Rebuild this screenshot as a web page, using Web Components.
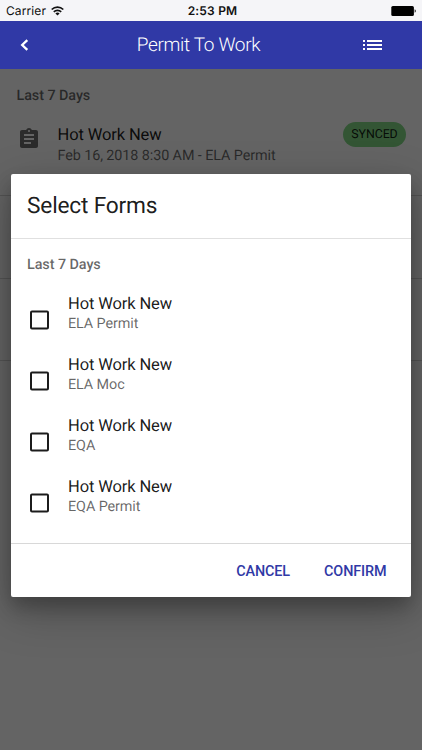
<!DOCTYPE html>
<html lang="en">
<head>
<meta charset="utf-8">
<meta name="viewport" content="width=device-width, initial-scale=1">
<title>Permit To Work</title>
<style>
	body {
		margin: 0;
		height: 100vh;
		overflow: hidden;
		font-family: Roboto, sans-serif;
		text-rendering: geometricPrecision;
	}
</style>
</head>
<body>
<permit-app></permit-app>

<script>
class StatusBar extends HTMLElement {
	constructor() {
		super();
		this.attachShadow({ mode: 'open' });
		this.shadowRoot.innerHTML = `
			<style>
				:host {
					display: grid;
					grid-template-columns: 1fr auto 1fr;
					align-items: center;
					height: 21px;
					padding: 0 5px 0 6px;
					box-sizing: border-box;
					background: #f5f5f8;
					color: #111;
					font: 12px/21px Inter, sans-serif;
				}
				.left {
					display: flex;
					align-items: center;
					gap: 5px;
				}
				.carrier {
					letter-spacing: 0.1px;
				}
				.time {
					padding-left: 2px;
					font-weight: 600;
					letter-spacing: 0.2px;
				}
				svg {
					display: block;
				}
				.battery {
					justify-self: end;
				}
			</style>
			<div class="left">
				<span class="carrier">${this.getAttribute('carrier')}</span>
				<svg width="13" height="10" viewBox="0 0 13 10" fill="none" stroke="#111" stroke-width="1.7">
					<path d="M.7 3.5a8.3 8.3 0 0 1 11.6 0M2.8 5.9a5.3 5.3 0 0 1 7.4 0"/>
					<path d="M6.5 9.6 4.4 7.5a3 3 0 0 1 4.2 0z" fill="#111" stroke="none"/>
				</svg>
			</div>
			<span class="time">${this.getAttribute('time')}</span>
			<svg class="battery" width="26" height="12" viewBox="0 0 26 12">
				<rect x=".3" y="1" width="22.6" height="10" rx="1.6" fill="#000"/>
				<path d="M23.7 4.3c1.4.4 1.4 3 0 3.4z" fill="#000"/>
			</svg>
		`;
	}
}
customElements.define('status-bar', StatusBar);

class AppToolbar extends HTMLElement {
	constructor() {
		super();
		this.attachShadow({ mode: 'open' });
		this.shadowRoot.innerHTML = `
			<style>
				:host {
					display: grid;
					grid-template-columns: 48px 1fr 98px;
					align-items: center;
					height: 48px;
					background: #3039a6;
					color: #fff;
				}
				h1 {
					margin: 0 -50px 0 0;
					padding-right: 25px;
					text-align: center;
					font-size: 19px;
					line-height: 48px;
					font-weight: 300;
					letter-spacing: -0.33px;
				}
				svg {
					display: block;
					justify-self: center;
				}
			</style>
			<svg width="24" height="24" viewBox="0 0 24 24" fill="none" stroke="#fff" stroke-width="2.3">
				<path d="M15.3 7.2 10.2 12l5.1 4.8"/>
			</svg>
			<h1><slot></slot></h1>
			<svg width="20" height="12" viewBox="0 0 20 12" fill="#fff">
				<path d="M0 1h2v2H0zM4 1h15v2H4zM0 5h2v2H0zM4 5h15v2H4zM0 9h2v2H0zM4 9h15v2H4z"/>
			</svg>
		`;
	}
}
customElements.define('app-toolbar', AppToolbar);

class ListHeading extends HTMLElement {
	constructor() {
		super();
		this.attachShadow({ mode: 'open' });
		this.shadowRoot.innerHTML = `
			<style>
				:host {
					display: block;
					height: 50px;
					padding: 0 16px;
					font-size: 14.4px;
					line-height: 52px;
					font-weight: 500;
					letter-spacing: -0.08px;
					color: rgba(0, 0, 0, 0.6);
				}
			</style>
			<slot></slot>
		`;
	}
}
customElements.define('list-heading', ListHeading);

class ItemText extends HTMLElement {
	constructor() {
		super();
		this.attachShadow({ mode: 'open' });
		this.shadowRoot.innerHTML = `
			<style>
				:host {
					display: block;
					font-size: 16.5px;
					line-height: 21px;
					letter-spacing: -0.12px;
					color: rgba(0, 0, 0, 0.9);
					white-space: nowrap;
				}
				.sub {
					font-size: 14.4px;
					line-height: var(--sub-line, 19px);
					letter-spacing: -0.1px;
					color: rgba(0, 0, 0, 0.6);
				}
			</style>
			<div><slot></slot></div>
			<div class="sub"><slot name="sub"></slot></div>
		`;
	}
}
customElements.define('item-text', ItemText);

class StatusChip extends HTMLElement {
	constructor() {
		super();
		this.attachShadow({ mode: 'open' });
		this.shadowRoot.innerHTML = `
			<style>
				:host {
					display: block;
					width: 63px;
					height: 25px;
					border-radius: 13px;
					background: #7fd583;
					text-align: center;
					font-size: 12.4px;
					line-height: 26px;
					letter-spacing: -0.1px;
					color: rgba(0, 0, 0, 0.87);
				}
			</style>
			<slot></slot>
		`;
	}
}
customElements.define('status-chip', StatusChip);

class PermitRow extends HTMLElement {
	constructor() {
		super();
		this.attachShadow({ mode: 'open' });
		this.shadowRoot.innerHTML = `
			<style>
				:host {
					display: flex;
					height: 82.5px;
					padding: 0 16px 0 16.5px;
					box-sizing: border-box;
					border-bottom: 1px solid #d2d2d2;
				}
				svg {
					margin: 6.5px 17px 0 0;
					fill: #6b6b6b;
				}
				::slotted(item-text) {
					flex: 1;
					margin-top: 5px;
				}
				::slotted(status-chip) {
					margin-top: 2px;
				}
			</style>
			${this.hasAttribute('empty') ? '' : `
			<svg width="24" height="24" viewBox="0 0 24 24">
				<path d="M19 3h-4.180C14.400 1.840 13.300 1 12 1c-1.300 0-2.400.84-2.820 2H5c-1.100 0-2 .9-2 2v14c0 1.100.9 2 2 2h14c1.100 0 2-.9 2-2V5c0-1.100-.9-2-2-2zm-7 0c.55 0 1 .45 1 1s-.45 1-1 1-1-.45-1-1 .45-1 1-1zm2 14H7v-2h7v2zm3-4H7v-2h10v2zm0-4H7V7h10v2z"/>
			</svg>`}
			<slot></slot>
		`;
	}
}
customElements.define('permit-row', PermitRow);

class CheckRow extends HTMLElement {
	constructor() {
		super();
		this.attachShadow({ mode: 'open' });
		this.shadowRoot.innerHTML = `
			<style>
				:host {
					display: flex;
					height: 61px;
					padding-left: 19px;
				}
				svg {
					margin: 21px 19px 0 0;
				}
				::slotted(item-text) {
					--sub-line: 17px;
					margin-top: 5px;
				}
			</style>
			<svg width="19" height="20" viewBox="0 0 19 20" role="checkbox" aria-checked="false">
				<rect x="1" y="1.500" width="17" height="17" rx="1" fill="none" stroke="#1c1c1c" stroke-width="2"/>
			</svg>
			<slot></slot>
		`;
	}
}
customElements.define('check-row', CheckRow);

class FormDialog extends HTMLElement {
	constructor() {
		super();
		this.attachShadow({ mode: 'open' });
		this.shadowRoot.innerHTML = `
			<style>
				:host {
					display: flex;
					flex-direction: column;
					width: 400px;
					height: 423px;
					border-radius: 2px;
					background: #fff;
					box-shadow: 0 14px 45px rgba(0, 0, 0, 0.25), 0 10px 18px rgba(0, 0, 0, 0.22);
				}
				h2 {
					margin: 0;
					padding: 0 16px;
					height: 64px;
					border-bottom: 1px solid #e0e0e0;
					font-size: 22.7px;
					line-height: 63px;
					font-weight: 400;
					letter-spacing: -0.18px;
					color: rgba(0, 0, 0, 0.9);
				}
				.content {
					flex: 1;
				}
				.actions {
					display: flex;
					justify-content: flex-end;
					gap: 34px;
					height: 53px;
					padding-right: 24.5px;
					border-top: 1px solid #d8d8d8;
				}
				button {
					padding: 0;
					border: 0;
					background: none;
					font: 500 14.4px/54px Roboto, sans-serif;
					letter-spacing: -0.1px;
					color: #3039a6;
				}
				button span {
					display: block;
					padding-top: 1px;
				}
			</style>
			<h2>${this.getAttribute('heading')}</h2>
			<div class="content"><slot></slot></div>
			<div class="actions">
				<button><span>CANCEL</span></button>
				<button><span>CONFIRM</span></button>
			</div>
		`;
	}
}
customElements.define('form-dialog', FormDialog);

class PermitApp extends HTMLElement {
	constructor() {
		super();
		this.attachShadow({ mode: 'open' });
		this.forms = ['ELA Permit', 'ELA Moc', 'EQA', 'EQA Permit'];
	}
	connectedCallback() {
		this.shadowRoot.innerHTML = `
			<style>
				:host {
					display: flex;
					flex-direction: column;
					height: 100%;
				}
				main {
					position: relative;
					flex: 1;
					background: #fafafa;
				}
				main > list-heading {
					padding: 1px 16.5px 0;
				}
				/* dims the list, the toolbar stays bright */
				.overlay {
					position: absolute;
					inset: 0;
					display: flex;
					justify-content: center;
					align-items: flex-start;
					padding-top: 105px;
					background: rgba(0, 0, 0, 0.6);
				}
				main > permit-row:first-of-type {
					height: 76px;
				}
			</style>
			<status-bar carrier="Carrier" time="2:53 PM"></status-bar>
			<app-toolbar>Permit To Work</app-toolbar>
			<main>
				<list-heading>Last 7 Days</list-heading>
				<permit-row>
					<item-text>Hot Work New<span slot="sub">Feb 16, 2018 8:30 AM - ELA Permit</span></item-text>
					<status-chip>SYNCED</status-chip>
				</permit-row>
				<permit-row empty></permit-row>
				<permit-row empty></permit-row>
				<div class="overlay">
					<form-dialog heading="Select Forms">
						<list-heading>Last 7 Days</list-heading>
						${this.forms.map((name) => `
						<check-row>
							<item-text>Hot Work New<span slot="sub">${name}</span></item-text>
						</check-row>`).join('')}
					</form-dialog>
				</div>
			</main>
		`;
	}
}
customElements.define('permit-app', PermitApp);
</script>
</body>
</html>
